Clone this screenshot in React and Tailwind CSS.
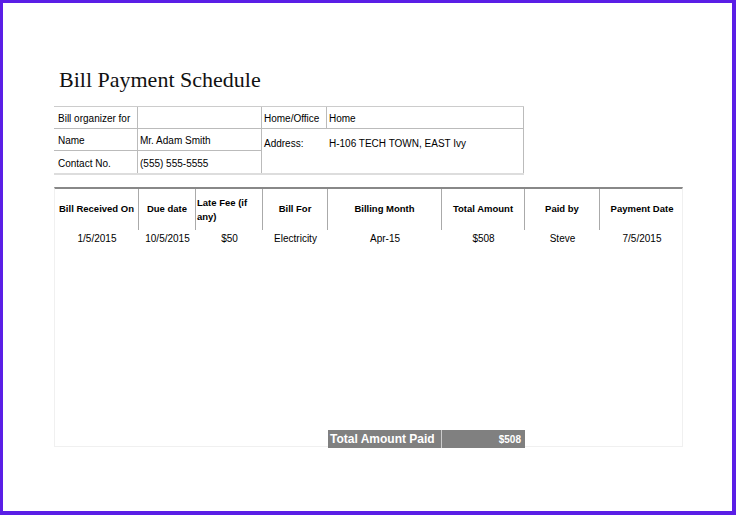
import React from 'react';

const cols = [84, 57, 67, 65, 114, 83, 75, 84];
const heads = ['Bill Received On', 'Due date', 'Late Fee (if any)', 'Bill For', 'Billing Month', 'Total Amount', 'Paid by', 'Payment Date'];
const row = ['1/5/2015', '10/5/2015', '$50', 'Electricity', 'Apr-15', '$508', 'Steve', '7/5/2015'];

const App = () => {
    const tpl = { gridTemplateColumns: cols.map((c) => c + 'px').join(' ') };
    return (
        <div className="w-[736px] h-[515px] bg-white border-l-[3px] border-t-[3px] border-r-[4px] border-b-[4px] border-[#5a1ee6] text-[10px] text-black" style={{ fontFamily: '"Liberation Sans", Arial, sans-serif' }}>
            <div className="pl-[56px] pt-[64px]">
                <h1 className="text-[22px] leading-[26px] text-[#111]" style={{ fontFamily: '"Liberation Serif", "DejaVu Serif", serif' }}>
                    Bill Payment Schedule
                </h1>
            </div>

            {/* Info table */}
            <div className="ml-[51px] mt-[13px] w-[470px] grid grid-cols-[84px_124px_65px_197px] border-t border-[#ccc] border-b-2 border-b-[#ddd]">
                <div className="h-[22px] flex items-center pl-1 pt-[2px] border-b border-r border-[#bbb]">Bill organizer for</div>
                <div className="h-[22px] border-b border-r border-[#bbb]"></div>
                <div className="h-[22px] flex items-center pl-[2px] pt-[2px] border-b border-r border-[#bbb]">Home/Office</div>
                <div className="h-[22px] flex items-center pl-[2px] pt-[2px] border-b border-r border-[#bbb]">Home</div>
                <div className="h-[22px] flex items-center pl-1 pt-[2px] border-b border-r border-[#bbb]">Name</div>
                <div className="h-[22px] flex items-center pl-[2px] pt-[2px] border-b border-r border-[#bbb]">Mr. Adam Smith</div>
                <div className="row-span-2 col-span-2 grid grid-cols-[65px_132px] border-r border-[#bbb]">
                    <div className="pt-[7px] pl-[2px]">Address:</div>
                    <div className="pt-[7px] pl-[2px] whitespace-nowrap">H-106 TECH TOWN, EAST Ivy</div>
                </div>
                <div className="h-[22px] flex items-center pl-1 pt-[2px] border-r border-[#bbb]">Contact No.</div>
                <div className="h-[22px] flex items-center pl-[2px] pt-[2px] border-r border-[#bbb]">(555) 555-5555</div>
            </div>

            {/* Main table */}
            <div className="ml-[51px] mt-[12px] w-[629px] border-t-2 border-[#888] border-x border-x-[#f0f0f0] border-b border-b-[#f0f0f0]">
                <div className="grid h-[41px] text-[9.5px]" style={tpl}>
                    {heads.map((h, i) => (
                        <div key={h} className={`flex items-center font-bold border-[#aaa] ${i < 7 ? 'border-r' : ''} ${i === 2 ? 'justify-start pl-[1px] leading-[14px]' : 'justify-center'} ${i === 0 ? 'justify-start pl-1' : ''}`}>
                            {h}
                        </div>
                    ))}
                </div>
                <div className="grid h-[17px]" style={tpl}>
                    {row.map((v, i) => (
                        <div key={i} className="flex items-center justify-center">{v}</div>
                    ))}
                </div>
                <div className="h-[183px]"></div>
                <div className="grid h-[16px]" style={tpl}>
                    <div></div><div></div><div></div><div></div>
                    <div className="bg-[#808080] text-white font-bold text-[12px] flex items-center pl-[2px] border-r border-[#ccc]">Total Amount Paid</div>
                    <div className="bg-[#808080] text-white font-bold flex items-center justify-end pr-1">$508</div>
                    <div></div><div></div>
                </div>
            </div>
        </div>
    );
};

export default App;
